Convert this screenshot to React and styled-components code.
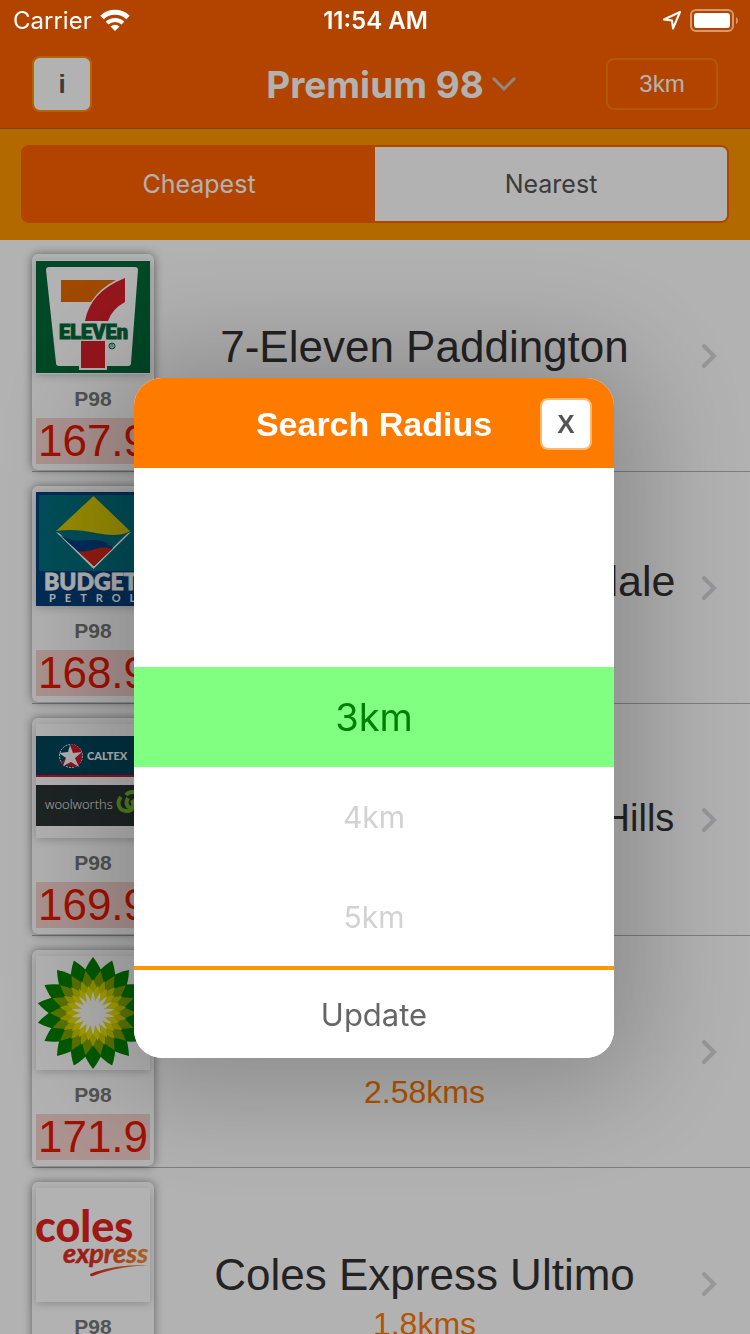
import React from "react";
import styled, { createGlobalStyle } from "styled-components";

const helvetica = `"Liberation Sans", Arial, sans-serif`;
const system = `Inter, "Liberation Sans", sans-serif`;

const GlobalStyle = createGlobalStyle`
  * { box-sizing: border-box; }
  html, body, #root { height: 100%; }
  body { margin: 0; overflow: hidden; background: #fff; font-family: ${helvetica}; }
  button { margin: 0; padding: 0; border: 0; font: inherit; cursor: pointer; }
  ul { margin: 0; padding: 0; list-style: none; }
`;

const Screen = styled.div`
  height: 100%;
  overflow: hidden;
`;

const Header = styled.header`
  background: #ff6200;
  border-bottom: 1px solid #b06800;
`;

const StatusBar = styled.div`
  position: relative;
  z-index: 3;
  display: grid;
  grid-template-columns: 1fr auto 1fr;
  align-items: center;
  height: 40px;
  padding: 0 12px 0 13px;
  color: #fff;
  font: 400 24px ${system};
`;

const StatusGroup = styled.div`
  display: flex;
  align-items: center;
  justify-content: ${(p) => (p.$end ? "flex-end" : "flex-start")};
  gap: 8px;
`;

const Clock = styled.time`
  font-weight: 600;
`;

const NavBar = styled.div`
  display: grid;
  grid-template-columns: 1fr auto 1fr;
  align-items: center;
  height: 88px;
  padding: 0 32px;
`;

const InfoButton = styled.button`
  width: 60px;
  height: 56px;
  border: 2px solid #ff9100;
  border-radius: 8px;
  background: #fff;
  color: #555;
  font: 700 26px ${helvetica};
`;

const FuelButton = styled.button`
  display: flex;
  align-items: center;
  gap: 8px;
  padding-left: 32px;
  background: none;
  color: #fff;
  font: 700 37px ${system};
`;

const RadiusButton = styled.button`
  justify-self: end;
  width: 112px;
  height: 52px;
  border: 2px solid #ff8200;
  border-radius: 8px;
  background: none;
  color: #fff;
  font: 400 24px ${helvetica};
`;

const SortBand = styled.div`
  padding: 16px 21px 17px;
  background: #ff9800;
`;

const Segments = styled.div`
  display: flex;
  height: 78px;
  border: 2px solid #ff6200;
  border-radius: 8px;
  overflow: hidden;
`;

const Segment = styled.button`
  flex: 1;
  background: ${(p) => (p.$active ? "#ff6200" : "#fff")};
  color: ${(p) => (p.$active ? "#fff" : "#555")};
  font: 400 25px ${system};
`;

const Row = styled.li`
  position: relative;
  display: flex;
  height: 232px;
  padding: 14px 32px 0;

  &::after {
    content: "";
    position: absolute;
    left: 32px;
    right: 0;
    bottom: 0;
    height: 1px;
    background: #b4b4b8;
  }
`;

const PriceCard = styled.div`
  flex: none;
  width: 122px;
  height: 216px;
  padding: 6px 4px 0;
  border-radius: 6px;
  background: #fff;
  box-shadow: 0 0 10px rgba(0, 0, 0, 0.45);
  z-index: 1;
`;

const LogoBox = styled.div`
  width: 114px;
  height: 114px;
  background: #fff;
  box-shadow: 0 2px 8px rgba(0, 0, 0, 0.2);

  svg { display: block; }
`;

const Grade = styled.div`
  height: 44px;
  padding-top: 3px;
  color: #777;
  font: 700 21px/44px ${helvetica};
  text-align: center;
`;

const Price = styled.div`
  height: 46px;
  background: #f6d3cf;
  color: #e81800;
  font: 400 44px/46px ${helvetica};
  text-align: center;
`;

const Station = styled.div`
  flex: 1;
  min-width: 0;
  display: flex;
  flex-direction: column;
  align-items: center;
  padding: 68px 7px 0 0;
  color: #333;
  white-space: nowrap;
`;

const nameSizes = {
  large: "44px/50px",
  medium: "43px/54px",
  small: "38px/64px",
};

const Name = styled.div`
  height: 56px;
  display: flex;
  justify-content: center;
  font: 400 ${(p) => nameSizes[p.$size]} ${helvetica};
`;

const Distance = styled.div`
  color: #ff7a00;
  font: 400 32px/36px ${helvetica};
`;

const Disclosure = styled.div`
  display: flex;
  align-items: center;
  height: 204px;
`;

const Backdrop = styled.div`
  position: fixed;
  inset: 0;
  z-index: 2;
  display: flex;
  align-items: center;
  justify-content: center;
  padding: 102px 2px 0 0;
  background: rgba(0, 0, 0, 0.3);
`;

const Dialog = styled.section`
  width: min(480px, 90%);
  border-radius: 28px;
  overflow: hidden;
  background: #fff;
  box-shadow: 0 4px 120px 28px rgba(0, 0, 0, 0.24);
`;

const DialogHeader = styled.div`
  display: grid;
  grid-template-columns: 1fr auto 1fr;
  align-items: center;
  height: 90px;
  padding: 2px 22px 0;
  background: #ff7b00;
`;

const DialogTitle = styled.h2`
  grid-column: 2;
  margin: 0;
  color: #fff;
  font: 700 34px/40px ${helvetica};
`;

const CloseButton = styled.button`
  justify-self: end;
  width: 52px;
  height: 52px;
  border: 2px solid #ffb870;
  border-radius: 8px;
  background: #fff;
  color: #555;
  font: 700 26px ${helvetica};
`;

const Picker = styled.ul`
  height: 498px;
  padding-top: 199px;
`;

const Option = styled.li`
  height: 100px;
  background: ${(p) => (p.$selected ? "#80ff80" : "none")};
  color: ${(p) => (p.$selected ? "#008000" : "#d2d2d2")};
  font: 400 ${(p) => (p.$selected ? 38 : 30)}px/100px ${system};
  text-align: center;
`;

const UpdateButton = styled.button`
  position: relative;
  display: block;
  width: 100%;
  height: 92px;
  border-top: 4px solid #ff9800;
  background: #fff;
  color: #666;
  font: 400 31px ${system};
`;

function SevenElevenLogo() {
  return (
    <svg width="114" height="114" viewBox="0 0 114 114" role="img" aria-label="7-Eleven">
      <rect y="1" width="114" height="112" fill="#006838" />
      <path d="M13 7h86q3 0 3 3l-7 93q0 3-3 3H23q-3 0-3-3L10 10q0-3 3-3Z" fill="#fff" />
      <rect x="43" y="78" width="28" height="32" fill="#fff" />
      <path d="M25 20h55Q64 28 55 42H25Z" fill="#e66a00" />
      <path d="M89 18v24q-13 7-17 19H49Q54 32 89 18Z" fill="#d81f2a" />
      <rect x="45" y="81" width="24" height="27" fill="#d81f2a" />
      <text x="23" y="79" fill="#006838" stroke="#006838" strokeWidth="1" fontFamily="Roboto" fontWeight="900" fontSize="20">ELEVEn</text>
      <circle cx="76" cy="86" r="3" fill="none" stroke="#006838" />
      <path d="M75 88v-4h1.500q1 1 0 2l1 2" fill="none" stroke="#006838" strokeWidth=".7" />
    </svg>
  );
}

function BudgetLogo() {
  return (
    <svg width="114" height="114" viewBox="0 0 114 114" role="img" aria-label="Budget Petrol">
      <rect width="114" height="114" fill="#00407c" />
      <rect x="3" y="3" width="108" height="76" fill="#00707f" />
      <path d="M20 40 57.500 77 95 40l-8 3H28Z" fill="#fff" />
      <path d="M21 39 58 74 94 39Z" fill="#00707f" />
      <path d="M57.500 4 94 39q-10 7-34 2-22-5-40-2Z" fill="#dccb00" />
      <path d="M24 43c12 8 22 5 34 5 10 0 14 3 19 8L58 74Z" fill="#003f85" />
      <path d="M42 59c14 3 20-7 34-2L57.500 74Z" fill="#d62718" />
      <text x="8" y="98" fill="#fff" stroke="#fff" strokeWidth=".8" fontFamily="Lato" fontWeight="900" fontSize="23">BUDGET</text>
      <text x="13" y="110" fill="#fff" fontFamily="Lato" fontWeight="700" fontSize="11" letterSpacing="9">PETROL</text>
    </svg>
  );
}

function CaltexLogo() {
  return (
    <svg width="114" height="114" viewBox="0 0 114 114" role="img" aria-label="Caltex Woolworths">
      <rect y="12" width="114" height="39" fill="#00475c" />
      <rect y="51" width="114" height="2" fill="#e0102c" />
      <circle cx="35" cy="32" r="11.500" fill="#00475c" stroke="#fff" strokeWidth="1" strokeDasharray="2 1" />
      <path d="M35 20a12 12 0 0 1 4 23l-15-3 8-8Z" fill="#d8152c" />
      <path d="m34 21 3 8 9-1-7 6 4 9-8-5-8 4 3-8-7-5 9-1Z" fill="#fff" />
      <text x="51" y="36" fill="#fff" fontFamily="Lato" fontWeight="900" fontSize="11">CALTEX</text>
      <rect y="61" width="114" height="41" fill="#2b3434" />
      <text x="9" y="85" fill="#fff" fontFamily="Open Sans" fontWeight="300" fontSize="13">woolworths</text>
      <path d="M85 73c-5 6-2 14 6 14 6 0 8-5 5-11M92 74c-3 5-1 10 4 10 5 0 7-4 6-9M90 71c3-4 10-4 12 0" fill="none" stroke="#72b52c" strokeWidth="4" />
    </svg>
  );
}

const petalLayers = [
  { radius: 56, half: 10, widest: 38, offset: 0, fill: "#008200" },
  { radius: 43, half: 7, widest: 26, offset: 10, fill: "#82a600" },
  { radius: 34, half: 5, widest: 20, offset: 0, fill: "#cfd000" },
  { radius: 28, half: 4, widest: 17, offset: 10, fill: "#ebe400" },
  { radius: 22, half: 2, widest: 13, offset: 0, fill: "#fff" },
];

function BpLogo() {
  return (
    <svg width="114" height="114" viewBox="0 0 114 114" role="img" aria-label="BP">
      <g transform="translate(57 57)">
        {petalLayers.map(({ radius: r, half: h, widest: w, offset, fill }) =>
          Array.from({ length: 18 }, (_, i) => (
            <path
              key={`${fill}${i}`}
              d={`M0 0L${-h} ${-w}Q${-h * 0.7} ${-(w + r) / 2} 0 ${-r}Q${h * 0.7} ${-(w + r) / 2} ${h} ${-w}Z`}
              transform={`rotate(${i * 20 + offset})`}
              fill={fill}
            />
          ))
        )}
        <circle r="12" fill="#fff" />
      </g>
    </svg>
  );
}

function ColesLogo() {
  return (
    <svg width="114" height="114" viewBox="0 0 114 114" role="img" aria-label="Coles Express">
      <defs>
        <linearGradient id="express" gradientUnits="userSpaceOnUse" x1="28" x2="113" y1="0" y2="0">
          <stop offset=".3" stopColor="#e02a20" />
          <stop offset="1" stopColor="#f59030" />
        </linearGradient>
      </defs>
      <text x="-1" y="54" fill="#e6231e" fontFamily="Lato" fontWeight="900" fontSize="43">coles</text>
      <text x="27" y="75" fill="url(#express)" stroke="url(#express)" strokeWidth=".5" fontFamily="Lato" fontWeight="700" fontStyle="italic" fontSize="27">express</text>
      <path d="M54 86Q78 76 113 77 78 79 57 88q-3 1-3-2Z" fill="url(#express)" />
    </svg>
  );
}

function Chevron() {
  return (
    <svg width="16" height="26" viewBox="0 0 16 26" fill="none" stroke="#d8d8da" strokeWidth="4" strokeLinecap="round" strokeLinejoin="miter" aria-hidden="true">
      <path d="M2 3l10 10L2 23" />
    </svg>
  );
}

const stations = [
  { name: "7-Eleven Paddington", size: "large", price: "167.9", distance: "1.2kms", Logo: SevenElevenLogo },
  { name: "Budget Petrol - Annandale", size: "medium", price: "168.9", distance: "2.9kms", Logo: BudgetLogo },
  { name: "Caltex Woolworths Surry Hills", size: "small", price: "169.9", distance: "1.1kms", Logo: CaltexLogo },
  { name: "BP Glebe", size: "large", price: "171.9", distance: "2.58kms", Logo: BpLogo },
  { name: "Coles Express Ultimo", size: "large", price: "171.9", distance: "1.8kms", Logo: ColesLogo },
];

const radii = ["3km", "4km", "5km"];

export default function App() {
  return (
    <Screen>
      <GlobalStyle />
      <Header>
        <StatusBar>
          <StatusGroup>
            <span>Carrier</span>
            <svg width="30" height="23" viewBox="0 0 30 23" fill="none" stroke="#fff" strokeWidth="5" aria-label="Wi-Fi">
              <path d="M2 8.500a19 19 0 0 1 26 0" />
              <path d="M7 14a12 12 0 0 1 16 0" strokeWidth="4" />
              <path d="M10.500 17.500a6.500 6.500 0 0 1 9 0L15 22Z" fill="#fff" stroke="none" />
            </svg>
          </StatusGroup>
          <Clock>11:54 AM</Clock>
          <StatusGroup $end>
            <svg width="20" height="20" viewBox="0 0 20 20" fill="none" stroke="#fff" strokeWidth="2" strokeLinejoin="round" aria-label="Location">
              <path d="M18 2 2 9.500l8 1 1 8Z" />
            </svg>
            <svg width="48" height="23" viewBox="0 0 48 23" aria-label="Battery">
              <rect x="1" y="1" width="42" height="21" rx="5" fill="none" stroke="#fff" strokeOpacity=".45" strokeWidth="2" />
              <rect x="4" y="4" width="36" height="15" rx="3" fill="#fff" />
              <path d="M46 8q2 1 2 3.500T46 15Z" fill="#fff" fillOpacity=".45" />
            </svg>
          </StatusGroup>
        </StatusBar>
        <NavBar>
          <InfoButton type="button" aria-label="Information">i</InfoButton>
          <FuelButton type="button">
            Premium 98
            <svg width="24" height="15" viewBox="0 0 24 15" fill="none" stroke="#d0c4bc" strokeWidth="3" aria-hidden="true">
              <path d="M1 1l11 11L23 1" />
            </svg>
          </FuelButton>
          <RadiusButton type="button">3km</RadiusButton>
        </NavBar>
      </Header>
      <SortBand>
        <Segments>
          <Segment type="button" $active>Cheapest</Segment>
          <Segment type="button">Nearest</Segment>
        </Segments>
      </SortBand>
      <ul>
        {stations.map(({ name, size, price, distance, Logo }) => (
          <Row key={name}>
            <PriceCard>
              <LogoBox><Logo /></LogoBox>
              <Grade>P98</Grade>
              <Price>{price}</Price>
            </PriceCard>
            <Station>
              <Name $size={size}>{name}</Name>
              <Distance>{distance}</Distance>
            </Station>
            <Disclosure><Chevron /></Disclosure>
          </Row>
        ))}
      </ul>
      <Backdrop>
        <Dialog role="dialog" aria-labelledby="radius-title">
          <DialogHeader>
            <DialogTitle id="radius-title">Search Radius</DialogTitle>
            <CloseButton type="button" aria-label="Close">X</CloseButton>
          </DialogHeader>
          <Picker role="listbox" aria-labelledby="radius-title">
            {radii.map((radius, i) => (
              <Option key={radius} role="option" aria-selected={i === 0} $selected={i === 0}>
                {radius}
              </Option>
            ))}
          </Picker>
          <UpdateButton type="button">Update</UpdateButton>
        </Dialog>
      </Backdrop>
    </Screen>
  );
}
